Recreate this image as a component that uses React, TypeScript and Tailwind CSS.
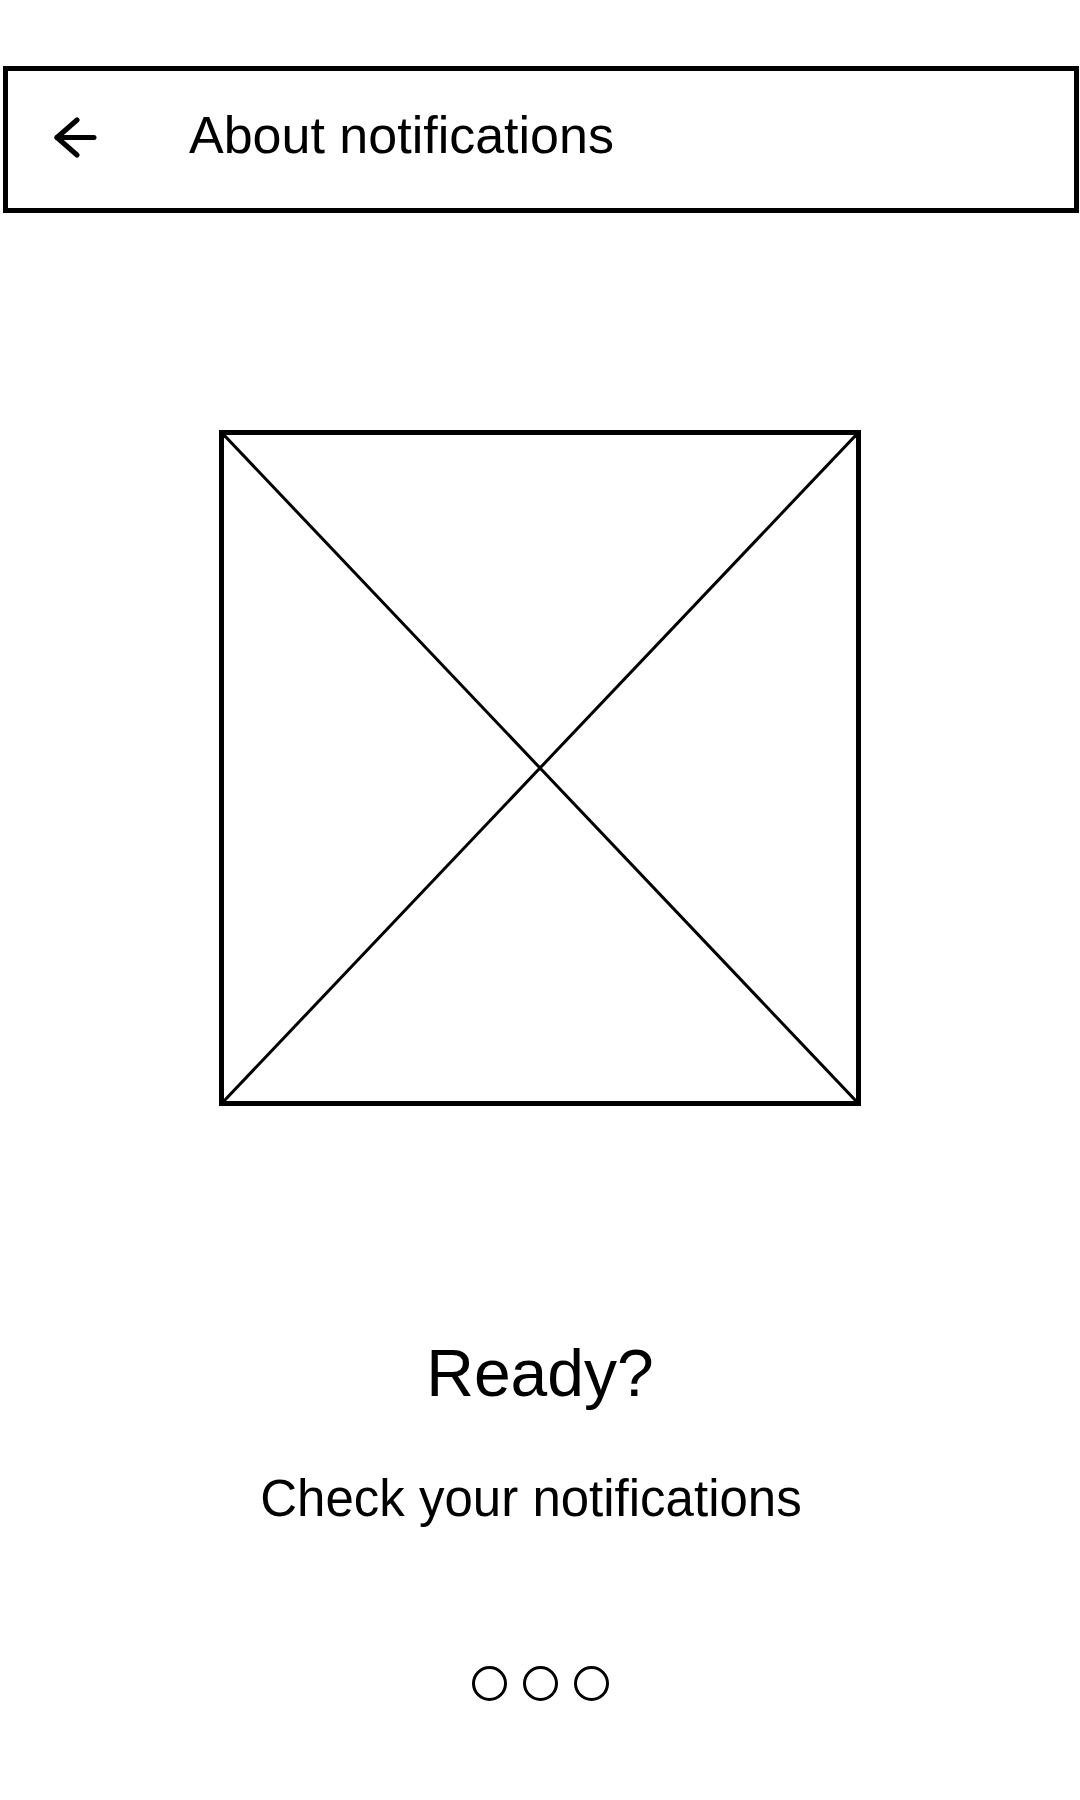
import React from 'react';

const BackArrow = () => (
  <svg width="44" height="42" viewBox="0 0 44 42" fill="none" stroke="black" strokeWidth="5" strokeLinecap="round" strokeLinejoin="round">
    <path d="M41 20.5H4" />
    <path d="M24 3L4 20.5L24 38" />
  </svg>
);

const App = () => {
  return (
    <div className="w-[1080px] min-h-[1800px] bg-white text-black font-['Liberation_Sans',Arial,sans-serif] flex flex-col">
      {/* Top bar */}
      <div className="ml-[3px] mt-[66px] w-[1076px] h-[147px] border-[5px] border-black flex items-start">
        <div className="ml-[45px] mt-[46px]">
          <BackArrow />
        </div>
        <h1 className="ml-[92px] mt-[38px] text-[52px] leading-none font-normal">About notifications</h1>
      </div>

      {/* Image placeholder */}
      <div className="mt-[217px] mx-auto w-[642px] h-[676px] border-[5px] border-black relative">
        <svg className="absolute inset-0 w-full h-full" viewBox="0 0 100 100" preserveAspectRatio="none">
          <line x1="0" y1="0" x2="100" y2="100" stroke="black" strokeWidth="3" vectorEffect="non-scaling-stroke" />
          <line x1="100" y1="0" x2="0" y2="100" stroke="black" strokeWidth="3" vectorEffect="non-scaling-stroke" />
        </svg>
      </div>

      {/* Copy */}
      <h2 className="mt-[234px] text-center text-[66px] leading-none font-normal">Ready?</h2>
      <p className="mt-[67px] pr-[18px] text-center text-[51px] leading-none">Check your notifications</p>

      {/* Pager dots */}
      <div className="mt-[142px] flex justify-center gap-[16px]">
        <span className="w-[35px] h-[35px] rounded-full border-[3px] border-black" />
        <span className="w-[35px] h-[35px] rounded-full border-[3px] border-black" />
        <span className="w-[35px] h-[35px] rounded-full border-[3px] border-black" />
      </div>
    </div>
  );
};

export default App;
